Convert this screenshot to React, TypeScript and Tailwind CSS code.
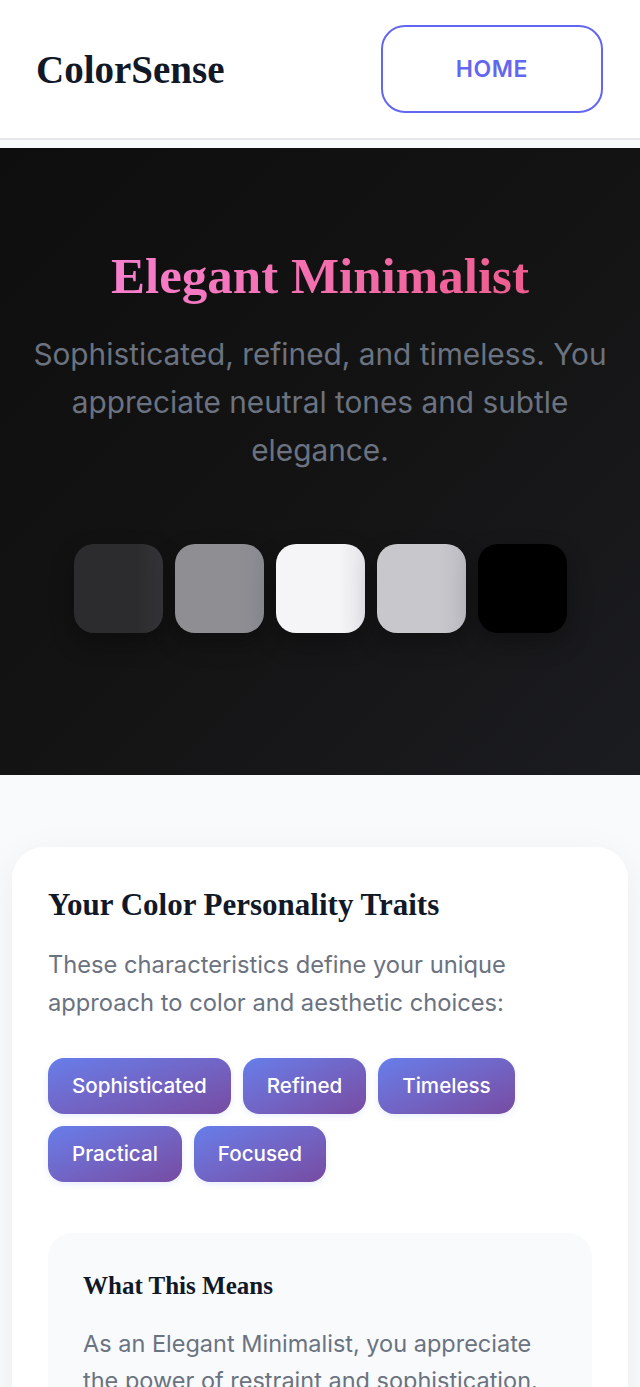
import React from "react";

const serif = { fontFamily: '"Liberation Serif", "DejaVu Serif", serif' } as const;

const swatches = ["#2c2c2e", "#8e8e93", "#f5f5f7", "#c7c7cc", "#000000"];
const traits = ["Sophisticated", "Refined", "Timeless", "Practical", "Focused"];

export default function App() {
  return (
    <div className="min-h-screen bg-[#f8fafc] font-['Inter','Liberation_Sans',sans-serif]">
      <header className="flex items-center justify-between bg-white border-b-2 border-[#e5e7eb] pl-9 pr-[37px] py-[25px]">
        <div className="text-[39px] font-bold text-[#111827] leading-none" style={serif}>
          ColorSense
        </div>
        <button className="w-[222px] h-[88px] rounded-[24px] border-2 border-[#6366f1] text-[#6366f1] text-[23px] font-semibold tracking-wide">
          HOME
        </button>
      </header>

      <section className="mt-2 bg-gradient-to-br from-[#0e0e0e] via-[#131313] to-[#1b1c20] pt-[98px] pb-[142px] px-6 text-center">
        <h1
          className="text-[51px] leading-[60px] font-bold bg-gradient-to-r from-[#f77fce] to-[#ee5c8e] bg-clip-text text-transparent inline-block"
          style={serif}
        >
          Elegant Minimalist
        </h1>
        <p className="mt-6 text-[29.8px] leading-[48px] text-[#6b7280]">
          Sophisticated, refined, and timeless. You appreciate neutral tones and subtle elegance.
        </p>
        <div className="mt-[70px] flex justify-center gap-3">
          {swatches.map((c) => (
            <div
              key={c}
              className="relative w-[89px] h-[89px] rounded-[20px] overflow-hidden shadow-[0_10px_25px_rgba(0,0,0,0.3)]"
              style={{ backgroundColor: c }}
            >
              {c !== "#000000" && (
                <div className="absolute inset-0 bg-gradient-to-r from-transparent from-70% to-[rgba(110,115,135,0.12)]" />
              )}
            </div>
          ))}
        </div>
      </section>

      <main className="px-3 pt-[72px] pb-10">
        <div className="bg-white rounded-[32px] shadow-[0_10px_40px_rgba(15,23,42,0.06)] px-9 pt-10 pb-10">
          <h2 className="text-[31px] leading-[36px] font-bold text-[#111827]" style={serif}>
            Your Color Personality Traits
          </h2>
          <p className="mt-[23px] text-[23.7px] leading-[38px] text-[#6b7280]">
            These characteristics define your unique approach to color and aesthetic choices:
          </p>
          <div className="mt-[36px] flex flex-wrap gap-3">
            {traits.map((t) => (
              <span
                key={t}
                className="h-14 px-6 flex items-center rounded-2xl bg-gradient-to-br from-[#667eea] to-[#764ba2] text-white text-[20.6px] font-medium shadow-[0_2px_6px_rgba(102,126,234,0.15)]"
              >
                {t}
              </span>
            ))}
          </div>
          <div className="mt-[51px] bg-[#f8fafc] rounded-[24px] px-[35px] pt-[38px] pb-9">
            <h3 className="text-[25px] leading-[30px] font-bold text-[#111827]" style={serif}>
              What This Means
            </h3>
            <p className="mt-6 text-[23.5px] leading-[37px] text-[#6b7280]">
              As an Elegant Minimalist, you appreciate the power of restraint and sophistication.
              You understand that less is often more, and you gravitate toward colors that
              create a sense of calm, clarity and timeless style.
            </p>
          </div>
        </div>
      </main>
    </div>
  );
}
